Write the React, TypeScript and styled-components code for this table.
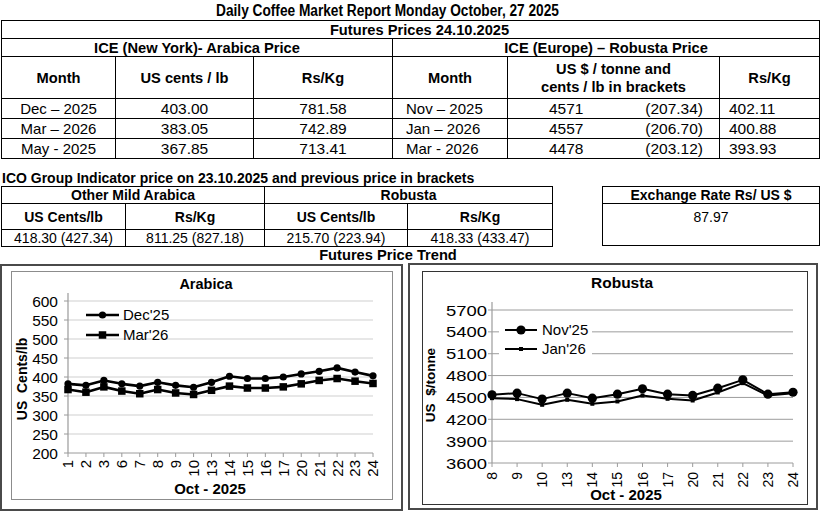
import React from "react";
import styled, { createGlobalStyle } from "styled-components";

const GlobalStyle = createGlobalStyle`
  html, body { margin: 0; padding: 0; background: #fff; }
  body { font-family: "Liberation Sans", Arial, sans-serif; color: #000; }
`;

const Page = styled.div`
  width: 822px;
  height: 518px;
  overflow: hidden;
  background: #fff;
`;

const Title = styled.div`
  height: 20px;
  box-sizing: border-box;
  padding: 2px 46px 0 0;
  text-align: center;
`;

const TitleText = styled.span`
  display: inline-block;
  font-size: 16px;
  font-weight: 700;
  line-height: 18px;
  white-space: nowrap;
  transform: scaleX(0.855);
`;

const Grid = styled.table<{ $w: number }>`
  border-collapse: collapse;
  table-layout: fixed;
  width: ${(p) => p.$w}px;
  margin-left: 1px;
`;

const Row = styled.tr<{ $h: number }>`
  height: ${(p) => p.$h}px;
`;

const Cell = styled.td<{ $bold?: boolean; $size?: number; $align?: string; $pl?: number; $valign?: string; $pt?: number; $lh?: number }>`
  border: 1px solid #000;
  padding: ${(p) => p.$pt ?? 0}px 0 0 ${(p) => p.$pl ?? 0}px;
  font-size: ${(p) => p.$size ?? 14.67}px;
  font-weight: ${(p) => (p.$bold ? 700 : 400)};
  line-height: ${(p) => p.$lh ?? 16}px;
  text-align: ${(p) => p.$align ?? "center"};
  vertical-align: ${(p) => p.$valign ?? "middle"};
  white-space: nowrap;
  overflow: hidden;
`;

const SplitValue = styled.div`
  display: flex;
  justify-content: space-between;
  padding: 0 16px 0 41px;
`;

const SectionHeading = styled.div<{ $mt: number; $size: number; $pl?: number; $pr?: number; $align?: string }>`
  margin-top: ${(p) => p.$mt}px;
  height: 16px;
  line-height: 16px;
  font-size: ${(p) => p.$size}px;
  font-weight: 700;
  padding: 0 ${(p) => p.$pr ?? 0}px 0 ${(p) => p.$pl ?? 0}px;
  text-align: ${(p) => p.$align ?? "left"};
  white-space: nowrap;
`;

const MiddleRow = styled.div`
  display: flex;
  align-items: flex-start;
  gap: 48px;
`;

const ChartsRow = styled.div`
  display: flex;
  align-items: flex-start;
  gap: 5px;
`;

const Panel = styled.div<{ $w: number; $h: number; $mt: number; $pl: number; $pt: number }>`
  box-sizing: border-box;
  width: ${(p) => p.$w}px;
  height: ${(p) => p.$h}px;
  margin-top: ${(p) => p.$mt}px;
  border: 2px solid #4a4a4a;
  padding: ${(p) => p.$pt}px 0 0 ${(p) => p.$pl}px;
`;

const Frame = styled.div<{ $w: number; $h: number; $c: string }>`
  box-sizing: border-box;
  width: ${(p) => p.$w}px;
  height: ${(p) => p.$h}px;
  border: 1px solid ${(p) => p.$c};
  background: #fff;
  svg { display: block; }
`;

type Series = { name: string; values: number[]; marker: "circle" | "square"; size: number; stroke: number };

type ChartCfg = {
  ox: number; oy: number; w: number; h: number;
  title: string; titleX: number; titleY: number; titleSize: number;
  yTitle: string; yTitleX: number; yTitleY: number; yTitleSize: number;
  xTitleX: number; xTitleY: number;
  yMin: number; yMax: number; yStep: number; yTop: number; yBottom: number;
  xLeft: number; xRight: number; xLabels: number[]; xLabelEndY: number; xLabelSize: number;
  yLabelEndX: number; yLabelLen?: number;
  gridColor: string; axisColor: string;
  legendX1: number; legendX2: number; legendTX: number; legendYs: number[];
  legendBg?: { x: number; y: number; w: number; h: number };
  series: Series[];
};

const FONT = "Liberation Sans, Arial, sans-serif";

function Marker({ x, y, s }: { x: number; y: number; s: Series }) {
  if (s.marker === "circle") return <circle cx={x} cy={y} r={s.size} fill="#000" />;
  return <rect x={x - s.size / 2} y={y - s.size / 2} width={s.size} height={s.size} fill="#000" />;
}

function Chart({ c }: { c: ChartCfg }) {
  const n = c.xLabels.length;
  const xs = c.xLabels.map((_, i) => c.xLeft + (i * (c.xRight - c.xLeft)) / (n - 1));
  const yOf = (v: number) => c.yBottom - ((v - c.yMin) / (c.yMax - c.yMin)) * (c.yBottom - c.yTop);
  const ticks: number[] = [];
  for (let v = c.yMin; v <= c.yMax; v += c.yStep) ticks.push(v);
  return (
    <svg width={c.w} height={c.h} viewBox={`${c.ox} ${c.oy} ${c.w} ${c.h}`} fontFamily={FONT}>
      <text x={c.titleX} y={c.titleY} fontSize={c.titleSize} fontWeight={700} textAnchor="middle">{c.title}</text>
      {ticks.map((v) => (
        <g key={v}>
          <line x1={c.xLeft} x2={c.xRight} y1={yOf(v)} y2={yOf(v)} stroke={v === c.yMin ? c.axisColor : c.gridColor} strokeWidth={1} />
          <line x1={c.xLeft - 4} x2={c.xLeft} y1={yOf(v)} y2={yOf(v)} stroke={c.axisColor} strokeWidth={1} />
          <text
            x={c.yLabelEndX}
            y={yOf(v) + 5.5}
            fontSize={15.5}
            textAnchor="end"
            textLength={c.yLabelLen}
            lengthAdjust={c.yLabelLen ? "spacingAndGlyphs" : undefined}
          >
            {v}
          </text>
        </g>
      ))}
      <line x1={c.xLeft} x2={c.xLeft} y1={c.yTop - 8} y2={c.yBottom} stroke={c.axisColor} strokeWidth={1.2} />
      {xs.map((x, i) => (
        <g key={i}>
          <line x1={x} x2={x} y1={c.yBottom} y2={c.yBottom + 4} stroke={c.axisColor} strokeWidth={1} />
          <text
            transform={`translate(${x + c.xLabelSize * 0.36} ${c.xLabelEndY}) rotate(-90)`}
            fontSize={c.xLabelSize}
            textAnchor="end"
          >
            {c.xLabels[i]}
          </text>
        </g>
      ))}
      <text x={c.xTitleX} y={c.xTitleY} fontSize={15} fontWeight={700} textAnchor="middle">Oct - 2025</text>
      <text
        transform={`translate(${c.yTitleX} ${c.yTitleY}) rotate(-90)`}
        fontSize={c.yTitleSize}
        fontWeight={700}
        textAnchor="middle"
        style={{ whiteSpace: "pre" }}
      >
        {c.yTitle}
      </text>
      {c.legendBg && <rect x={c.legendBg.x} y={c.legendBg.y} width={c.legendBg.w} height={c.legendBg.h} fill="#fff" />}
      {c.series.map((s, si) => {
        const ly = c.legendYs[si];
        const mx = (c.legendX1 + c.legendX2) / 2;
        return (
          <g key={s.name}>
            <polyline
              points={s.values.map((v, i) => `${xs[i]},${yOf(v)}`).join(" ")}
              fill="none"
              stroke="#000"
              strokeWidth={s.stroke}
              strokeLinejoin="round"
            />
            {s.values.map((v, i) => (
              <Marker key={i} x={xs[i]} y={yOf(v)} s={s} />
            ))}
            <line x1={c.legendX1} x2={c.legendX2} y1={ly} y2={ly} stroke="#000" strokeWidth={s.stroke} />
            <Marker x={mx} y={ly} s={s} />
            <text x={c.legendTX} y={ly + 5.3} fontSize={15}>{s.name}</text>
          </g>
        );
      })}
    </svg>
  );
}

const arabica: ChartCfg = {
  ox: 12, oy: 269, w: 380, h: 227,
  title: "Arabica", titleX: 206, titleY: 286, titleSize: 14.5,
  yTitle: "US  Cents/lb", yTitleX: 27, yTitleY: 376, yTitleSize: 14,
  xTitleX: 210, xTitleY: 491,
  yMin: 200, yMax: 600, yStep: 50, yTop: 298, yBottom: 450,
  xLeft: 68, xRight: 373,
  xLabels: [1, 2, 3, 6, 7, 8, 9, 10, 13, 14, 15, 16, 17, 20, 21, 22, 23, 24],
  xLabelEndY: 457, xLabelSize: 15,
  yLabelEndX: 58,
  gridColor: "#cfcfcf", axisColor: "#9a9a9a",
  legendX1: 86, legendX2: 119, legendTX: 123, legendYs: [312, 332],
  series: [
    { name: "Dec'25", marker: "circle", size: 3.6, stroke: 2.6, values: [382, 378, 391, 382, 376, 386, 378, 373, 386, 402, 396, 396, 400, 408, 415, 424, 413, 403] },
    { name: "Mar'26", marker: "square", size: 7.5, stroke: 2.6, values: [367, 360, 374, 363, 356, 367, 358, 354, 365, 376, 371, 371, 374, 382, 391, 396, 389, 383] },
  ],
};

const robusta: ChartCfg = {
  ox: 423, oy: 269, w: 384, h: 232,
  title: "Robusta", titleX: 622, titleY: 285, titleSize: 15.5,
  yTitle: "US  $/tonne", yTitleX: 435, yTitleY: 382, yTitleSize: 13.5,
  xTitleX: 626, xTitleY: 497,
  yMin: 3600, yMax: 5700, yStep: 300, yTop: 307, yBottom: 460,
  xLeft: 492, xRight: 793,
  xLabels: [8, 9, 10, 13, 14, 15, 16, 17, 20, 21, 22, 23, 24],
  xLabelEndY: 469, xLabelSize: 14,
  yLabelEndX: 487, yLabelLen: 41,
  gridColor: "#9c9c9c", axisColor: "#9c9c9c",
  legendX1: 505, legendX2: 537, legendTX: 542, legendYs: [327, 346],
  legendBg: { x: 499, y: 314, w: 93, h: 44 },
  series: [
    { name: "Nov'25", marker: "circle", size: 4.6, stroke: 2, values: [4536, 4559, 4477, 4559, 4490, 4545, 4618, 4545, 4527, 4627, 4741, 4545, 4571] },
    { name: "Jan'26", marker: "square", size: 4, stroke: 2, values: [4490, 4477, 4399, 4467, 4413, 4445, 4527, 4481, 4458, 4568, 4696, 4527, 4557] },
  ],
};

const arabicaRows = [
  ["Dec \u2013 2025", "403.00", "781.58"],
  ["Mar \u2013 2026", "383.05", "742.89"],
  ["May - 2025", "367.85", "713.41"],
];

const robustaRows = [
  ["Nov \u2013 2025", "4571", "(207.34)", "402.11"],
  ["Jan \u2013 2026", "4557", "(206.70)", "400.88"],
  ["Mar - 2026", "4478", "(203.12)", "393.93"],
];

const NUM = 15.5;

export default function App() {
  return (
    <Page>
      <GlobalStyle />
      <Title>
        <TitleText>Daily Coffee Market Report Monday October, 27 2025</TitleText>
      </Title>

      <Grid $w={818}>
        <colgroup>
          <col style={{ width: 114 }} />
          <col style={{ width: 138 }} />
          <col style={{ width: 139 }} />
          <col style={{ width: 115 }} />
          <col style={{ width: 212 }} />
          <col style={{ width: 100 }} />
        </colgroup>
        <tbody>
          <Row $h={18}>
            <Cell colSpan={6} $bold $pl={18}>Futures Prices 24.10.2025</Cell>
          </Row>
          <Row $h={18}>
            <Cell colSpan={3} $bold>ICE (New York)- Arabica Price</Cell>
            <Cell colSpan={3} $bold>ICE (Europe) – Robusta Price</Cell>
          </Row>
          <Row $h={42}>
            <Cell $bold>Month</Cell>
            <Cell $bold>US cents / lb</Cell>
            <Cell $bold>Rs/Kg</Cell>
            <Cell $bold>Month</Cell>
            <Cell $bold $lh={18}>
              US $ / tonne and
              <br />
              cents / lb in brackets
            </Cell>
            <Cell $bold>Rs/Kg</Cell>
          </Row>
          {arabicaRows.map((a, i) => {
            const r = robustaRows[i];
            return (
              <Row $h={20} key={i}>
                <Cell $size={15}>{a[0]}</Cell>
                <Cell $size={NUM}>{a[1]}</Cell>
                <Cell $size={NUM}>{a[2]}</Cell>
                <Cell $size={15} $align="left" $pl={13}>{r[0]}</Cell>
                <Cell $size={NUM}>
                  <SplitValue>
                    <span>{r[1]}</span>
                    <span>{r[2]}</span>
                  </SplitValue>
                </Cell>
                <Cell $size={NUM} $align="left" $pl={9}>{r[3]}</Cell>
              </Row>
            );
          })}
        </tbody>
      </Grid>

      <SectionHeading $mt={11} $size={14} $pl={2}>
        ICO Group Indicator price on 23.10.2025 and previous price in brackets
      </SectionHeading>

      <MiddleRow>
        <Grid $w={551}>
          <colgroup>
            <col style={{ width: 124 }} />
            <col style={{ width: 139 }} />
            <col style={{ width: 143 }} />
            <col style={{ width: 145 }} />
          </colgroup>
          <tbody>
            <Row $h={17}>
              <Cell colSpan={2} $bold $size={14}>Other Mild Arabica</Cell>
              <Cell colSpan={2} $bold $size={14}>Robusta</Cell>
            </Row>
            <Row $h={26}>
              <Cell $bold $size={14}>US Cents/lb</Cell>
              <Cell $bold $size={14}>Rs/Kg</Cell>
              <Cell $bold $size={14}>US Cents/lb</Cell>
              <Cell $bold $size={14}>Rs/Kg</Cell>
            </Row>
            <Row $h={16}>
              <Cell $size={14}>418.30 (427.34)</Cell>
              <Cell $size={14}>811.25 (827.18)</Cell>
              <Cell $size={14}>215.70 (223.94)</Cell>
              <Cell $size={14}>418.33 (433.47)</Cell>
            </Row>
          </tbody>
        </Grid>
        <Grid $w={218}>
          <tbody>
            <Row $h={17}>
              <Cell $bold $size={14}>Exchange Rate Rs/ US $</Cell>
            </Row>
            <Row $h={42}>
              <Cell $size={14} $valign="top" $pt={5}>87.97</Cell>
            </Row>
          </tbody>
        </Grid>
      </MiddleRow>

      <SectionHeading $mt={0} $size={14.67} $pr={46} $align="center">
        Futures Price Trend
      </SectionHeading>

      <ChartsRow>
        <Panel $w={403} $h={247} $mt={1} $pl={9} $pt={5}>
          <Frame $w={382} $h={229} $c="#8c8c8c">
            <Chart c={arabica} />
          </Frame>
        </Panel>
        <Panel $w={410} $h={247} $mt={0} $pl={12} $pt={6}>
          <Frame $w={386} $h={234} $c="#333">
            <Chart c={robusta} />
          </Frame>
        </Panel>
      </ChartsRow>
    </Page>
  );
}
